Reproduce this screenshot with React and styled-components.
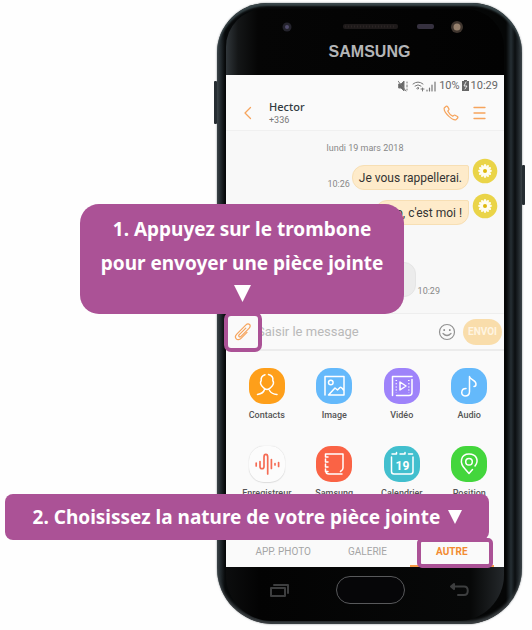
import React from "react";
import styled, { createGlobalStyle } from "styled-components";

const PLUM = "#ab5296";
const ORANGE = "#f6a45c";

const GlobalStyle = createGlobalStyle`
  * { box-sizing: border-box; }
  body { margin: 0; background: #fefefe; font-family: Roboto, "Liberation Sans", sans-serif; }
  button { margin: 0; padding: 0; border: 0; background: none; font: inherit; color: inherit; cursor: pointer; }
  p, h1, h2 { margin: 0; font-weight: 400; }
  svg { display: block; fill: none; stroke-linecap: round; stroke-linejoin: round; }
`;

const Page = styled.main`
  position: relative;
  display: grid;
  grid-template-columns: 217fr 305fr 10fr;
  padding: 3px 0 6px;
`;

const Phone = styled.section`
  position: relative;
  grid-column: 2;
  padding: 0 18px 0 9px;
  border-radius: 50px 50px 56px 56px;
  background: linear-gradient(90deg, #394247 0, #20272b 4px, #07090a 8px, #050606 289px, #252e33 294px, #0b0e10 298px, #1d2327 301px, #394145 100%);
  box-shadow: inset 0 3px 2px #39464a, inset 0 -3px 3px #3c4144, 0 0 2px #777d80;
`;

const SideKey = styled.span`
  position: absolute;
  ${(p) => p.$side}: -3px;
  top: ${(p) => p.$top}px;
  width: 3px;
  height: ${(p) => p.$length}px;
  border-radius: 1px;
  background: #262d32;
`;

const TopBezel = styled.header`
  margin-top: 6px;
  height: 66px;
  border-radius: 38px 38px 0 0;
  background: linear-gradient(90deg, #30363a 0, #141617 12px, #050505 32px, #020202 100%);
  display: flex;
  flex-direction: column;
  align-items: center;
`;

const Sensors = styled.svg`
  width: 100%;
  height: 32px;
`;

const Brand = styled.h1`
  padding-left: 9px;
  color: #b4b5b7;
  font: 700 16px/22px "Liberation Sans", Arial, sans-serif;
`;

const Screen = styled.div`
  background: #fafafa;
  color: #252525;
`;

const StatusBar = styled.div`
  height: 21px;
  padding-right: 6px;
  display: flex;
  align-items: center;
  justify-content: flex-end;
  gap: 2px;
  color: #666;
  font-size: 11px;
  line-height: 20px;
`;

const ContactBar = styled.header`
  height: 35px;
  padding: 0 18px 0 17px;
  display: flex;
  align-items: center;
  border-bottom: 1px solid #f0f0f0;
`;

const IconButton = styled.button`
  display: grid;
  place-items: center;
  flex: none;
  color: ${ORANGE};
`;

const Identity = styled.div`
  flex: 1;
  margin-left: 16px;
`;

const Name = styled.h2`
  font: 500 11px/14px "Noto Sans", sans-serif;
  color: #333a40;
`;

const Number = styled.p`
  font-size: 9px;
  line-height: 12px;
  color: #777;
`;

const HeaderActions = styled.div`
  display: flex;
  align-items: center;
  gap: 14px;
`;

const Chat = styled.div`
  height: 182px;
  padding-top: 10px;
  background: #f8f8f8;
`;

const ChatDate = styled.p`
  text-align: center;
  font-size: 9px;
  line-height: 14px;
  color: #888;
`;

const SentRow = styled.div`
  display: flex;
  justify-content: flex-end;
  align-items: flex-end;
  height: 35px;
  padding-right: 6px;
`;

const Time = styled.time`
  font-size: 9px;
  line-height: 12px;
  color: #888;
  margin-right: 2px;
`;

const SentBubble = styled.p`
  height: 25px;
  padding: 0 6px;
  border: 1px solid #f7dfb4;
  border-radius: 12px 2px 12px 12px;
  background: #feebca;
  font-size: 12px;
  line-height: 24px;
  color: #333;
`;

const Avatar = styled.svg`
  width: 26px;
  height: 26px;
  margin: 0 0 6px 3px;
`;

const ReceivedRow = styled.div`
  display: flex;
  align-items: flex-end;
  gap: 2px;
  padding: 37px 62px 0 28px;
`;

const ReceivedBubble = styled.div`
  flex: 1;
  height: 35px;
  border: 1px solid #e5e5e5;
  border-radius: 2px 12px 12px 12px;
  background: #ececec;
`;

const Composer = styled.form`
  height: 38px;
  padding-right: 2px;
  display: flex;
  align-items: center;
  border-top: 1px solid #eee;
  border-bottom: 2px solid #ececec;
`;

const AttachButton = styled(IconButton)`
  position: relative;
  width: 38px;
  height: 40px;
  margin-left: -2px;
  border: 4px solid ${PLUM};
  border-radius: 7px;
  background: #fafafa;
`;

const MessageInput = styled.input`
  flex: 1;
  min-width: 0;
  height: 30px;
  margin-left: -5px;
  padding: 0;
  border: 0;
  outline: 0;
  background: none;
  font: 13px/30px Roboto, sans-serif;
  &::placeholder { color: #b9b9b9; opacity: 1; }
`;

const SendButton = styled.button`
  width: 39px;
  height: 26px;
  margin-left: 7px;
  border-radius: 13px;
  background: #f9ddab;
  color: #fff5e2;
  font-size: 10px;
  font-weight: 700;
`;

const Attachments = styled.div`
  height: 187px;
  padding: 17px 1px 0 7px;
  display: grid;
  grid-template-columns: repeat(4, 1fr);
  grid-auto-rows: 78px;
  overflow: hidden;
`;

const Attachment = styled.button`
  display: flex;
  flex-direction: column;
  align-items: center;
  gap: 4px;
  font-size: 9px;
  font-weight: 500;
  line-height: 14px;
  color: #555;
`;

const Tile = styled.svg`
  width: 36px;
  height: 36px;
  border-radius: 15px;
  background: ${(p) => p.$fill};
  stroke: ${(p) => p.$ink || "#fff"};
  stroke-width: 1.5;
  box-shadow: ${(p) => (p.$ink ? "0 1px 1px #ddd, 0 0 1px #ccc" : "none")};
`;

const Tabs = styled.nav`
  height: 29px;
  padding: 0 10px 0 15px;
  display: grid;
  grid-template-columns: repeat(3, 1fr);
`;

const Tab = styled.button`
  position: relative;
  font-size: 10px;
  font-weight: ${(p) => (p.$active ? 700 : 400)};
  color: ${(p) => (p.$active ? "#f28b30" : "#a5a5a5")};
  border-bottom: 2px solid ${(p) => (p.$active ? "#f79a44" : "transparent")};
`;

const TabMarker = styled.span`
  position: absolute;
  inset: 0 1px -3px 7px;
  border: 4px solid ${PLUM};
  border-radius: 5px;
`;

const BottomBezel = styled.footer`
  height: 54px;
  margin-bottom: 3px;
  padding: 0 35px 8px 44px;
  border-radius: 0 0 46px 46px;
  background: linear-gradient(90deg, #0c0d0e, #030303 12%, #070808 88%, #24282b 100%);
  display: flex;
  align-items: center;
  justify-content: space-between;
  color: #3d3e3f;
`;

const BezelKey = styled.button`
  display: grid;
  place-items: center;
`;

const HomeKey = styled.button`
  width: 69px;
  height: 28px;
  border: 1px solid #58595b;
  border-radius: 14px;
  background: #060608;
`;

const Callout = styled.p`
  position: absolute;
  z-index: 2;
  top: ${(p) => p.$top}px;
  left: ${(p) => p.$left}%;
  right: ${(p) => p.$right}%;
  padding: ${(p) => p.$pad}px 0;
  border-radius: ${(p) => p.$radius}px;
  background: ${PLUM};
  color: #fff;
  text-align: center;
  white-space: nowrap;
  font: 700 19px/34px "Noto Sans", "Open Sans", sans-serif;
`;

const Arrow = styled.svg`
  display: ${(p) => (p.$block ? "block" : "inline-block")};
  width: ${(p) => (p.$block ? 17 : 14)}px;
  height: ${(p) => (p.$block ? 17 : 14)}px;
  margin: ${(p) => (p.$block ? "5px auto 4px" : "0 0 0 3px")};
  vertical-align: 0;
  fill: #fff;
`;

function DownArrow({ block }) {
  return (
    <Arrow $block={block} viewBox="0 0 16 16" aria-hidden="true">
      <path d="M0 0H16L8 16Z" />
    </Arrow>
  );
}

function Daisy() {
  const petals = Array.from({ length: 12 }, (_, i) => i * 30);
  return (
    <Avatar viewBox="0 0 26 26" aria-hidden="true">
      <circle cx="13" cy="13" r="12.3" fill="#ead448" />
      {petals.map((a) => (
        <ellipse key={a} cx="13" cy="9.500" rx="1.4" ry="3.400" fill="#fffdf0" transform={`rotate(${a} 13 13)`} />
      ))}
      <circle cx="13" cy="13" r="2" fill="#dfb90c" />
    </Avatar>
  );
}

const drawings = {
  contacts: <path d="M19.500 6.500C23 7.500 24.300 10 23.800 12.500C25.500 15 23.500 18 21.500 19.800C19.500 22 16.500 22 14.500 19.800C12 17.500 10.500 15 12.200 12.500C11.800 9.500 13.500 7.500 16 6.700M15.500 21.500Q14.500 25.500 8.500 26.500M20.500 22.500Q22.500 26 28 26.500" />,
  image: (
    <>
      <path d="M9 27V8.500H28V27H12.500L19 20L21.500 22L24 19.500Q25 18.500 27.500 22" />
      <circle cx="14.800" cy="14.500" r="2.300" />
    </>
  ),
  video: (
    <>
      <path d="M28 8.500H8.500V27.500M12.500 27.500H25Q28 27.500 28 24.500V11.500M16 14V22L22 18Z" />
      <path d="M12.300 12V25M24.800 12V25" strokeDasharray="1 2.200" strokeLinecap="butt" />
    </>
  ),
  audio: <path d="M15 20.500C9.500 20.500 9.500 28 14 28Q18.500 28 18.500 23.500V8.500C19 12 25 12 25 16Q25 18.500 23 18.500" />,
  recorder: (
    <path strokeWidth="1.700" d="M7.200 17V20M11 15.500V20.500C11 23.500 15 23.500 15 20.500V11C15 7.500 18.700 7.500 18.700 11V28M22.400 13.500V22.500M26 17.500V19M29.600 16.500V20.500" />
  ),
  notes: <path d="M9.500 11V8H27V22Q27 24 24.500 25.500M10 25.500Q10 28 13 28H26M9.500 11H12M9.500 13V16H12M9.500 18V21H12M9.500 23V25.500H12" />,
  calendar: (
    <>
      <path d="M8 8H12.500M16 8H21M24.500 8H28.500M12.500 6.500V8M21 6.500V8M7.500 11V25.500Q7.500 28 10 28H26.500Q29 28 29 25.500V11" />
      <text x="18.500" y="23.500" textAnchor="middle" fill="#fff" stroke="none" fontFamily="Roboto, sans-serif" fontSize="12" fontWeight="700">19</text>
    </>
  ),
  position: (
    <>
      <path d="M21.500 23.500L18 27.500L14.500 23.500C7.500 16.500 10 8 18 8C26 8 28 15 24 20" />
      <circle cx="18" cy="15.800" r="3.300" />
    </>
  ),
};

const attachments = [
  { id: "contacts", label: "Contacts", fill: "#fe9f1a" },
  { id: "image", label: "Image", fill: "#64b9fb" },
  { id: "video", label: "Vidéo", fill: "#9e83fa" },
  { id: "audio", label: "Audio", fill: "#64b9fb" },
  { id: "recorder", label: "Enregistreur", fill: "#fcfcfc", ink: "#f56c55" },
  { id: "notes", label: "Samsung", fill: "#fa6345" },
  { id: "calendar", label: "Calendrier", fill: "#42bfce" },
  { id: "position", label: "Position", fill: "#43d63c" },
];

function StatusIcons() {
  return (
    <svg width="39" height="12" viewBox="0 0 39 12" stroke="#777" aria-hidden="true">
      <path d="M1 4H3L6 1V11L3 8H1Z" fill="#666" />
      <path d="M0 1L8 11M9 2V3M9 5V7M9 9V10" />
      <path d="M15 4Q20 0 25 4M17 6Q20 3.500 23 6M19 8Q20 7 21 8L20 9Z" />
      <path d="M23 9H26M24.500 8V11" />
      <path d="M29 11V10M31.500 11V8M34 11V5M37 11V2" strokeWidth="1.200" />
    </svg>
  );
}

export default function App() {
  return (
    <>
      <GlobalStyle />
      <Page>
        <Phone>
          <SideKey $side="left" $top={78} $length={43} />
          <SideKey $side="right" $top={162} $length={40} />
          <TopBezel>
            <Sensors viewBox="0 0 278 32" aria-hidden="true">
              <circle cx="61" cy="18" r="4.500" fill="#24232c" />
              <circle cx="61" cy="18" r="2" fill="#514c6c" />
              <rect x="117" y="15" width="55" height="5" rx="2" fill="#1e1a1a" />
              <path d="M119 17.500H170" stroke="#2b2524" strokeWidth="2" strokeDasharray="1 2" strokeLinecap="butt" />
              <rect x="191" y="15" width="17" height="5" rx="2" fill="#36313f" />
              <circle cx="231" cy="18" r="6" fill="#40362f" />
              <circle cx="231" cy="18" r="3.500" fill="#96806c" />
            </Sensors>
            <Brand>SAMSUNG</Brand>
          </TopBezel>

          <Screen>
            <StatusBar>
              <StatusIcons />
              <span>10%</span>
              <svg width="7" height="11" viewBox="0 0 7 11" aria-hidden="true">
                <path d="M2 0H5V1H7V11H0V1H2Z" fill="#666" />
                <path d="M4 2L2 6H5L3 9" stroke="#fff" strokeWidth="0.800" />
              </svg>
              <span>10:29</span>
            </StatusBar>

            <ContactBar>
              <IconButton aria-label="Retour">
                <svg width="10" height="14" viewBox="0 0 10 14" stroke="currentColor" strokeWidth="1.300"><path d="M7.500 1.500L2 7L7.500 12.500" /></svg>
              </IconButton>
              <Identity>
                <Name>Hector</Name>
                <Number>+336</Number>
              </Identity>
              <HeaderActions>
                <IconButton aria-label="Appeler">
                  <svg width="16" height="16" viewBox="0 0 16 16" stroke="currentColor" strokeWidth="1.200">
                    <path d="M1.200 3L3.200 1.200Q4 .8 4.600 1.600L5.900 3.900Q6.200 4.600 5.600 5.200L4.700 6.100Q6.500 9.700 9.800 11.300L10.800 10.400Q11.400 9.900 12.100 10.300L14.400 11.600Q15.200 12.200 14.700 13L13.100 14.700Q10.500 15.600 5.900 11.400Q.5 6.300 1.200 3Z" />
                  </svg>
                </IconButton>
                <IconButton aria-label="Menu">
                  <svg width="13" height="14" viewBox="0 0 13 14" stroke="currentColor" strokeWidth="1.300"><path d="M1 1.500H12M1 7H12M1 12.500H12" /></svg>
                </IconButton>
              </HeaderActions>
            </ContactBar>

            <Chat>
              <ChatDate>lundi 19 mars 2018</ChatDate>
              <SentRow>
                <Time>10:26</Time>
                <SentBubble>Je vous rappellerai.</SentBubble>
                <Daisy />
              </SentRow>
              <SentRow>
                <SentBubble>Allo, c'est moi !</SentBubble>
                <Daisy />
              </SentRow>
              <ReceivedRow>
                <ReceivedBubble />
                <Time>10:29</Time>
              </ReceivedRow>
            </Chat>

            <Composer onSubmit={(e) => e.preventDefault()}>
              <AttachButton type="button" aria-label="Joindre un fichier">
                <svg width="18" height="18" viewBox="0 0 18 18" stroke="currentColor" strokeWidth="1.200">
                  <path d="M11.800 5.200L5.300 11.700C3.900 13.100 5.500 14.800 7 13.300L15 5.300C18 2.200 14.600 -.8 11.700 2.100L3 10.800C-.8 14.600 3.400 19 7.300 15.100L13 9.400" />
                </svg>
              </AttachButton>
              <MessageInput aria-label="Message" placeholder="Saisir le message" />
              <IconButton type="button" aria-label="Émoticônes">
                <svg width="18" height="18" viewBox="0 0 18 18" stroke="#929292" strokeWidth="1.200">
                  <circle cx="9" cy="9" r="7.500" />
                  <path d="M5 10.500Q9 14.500 13 10.500" />
                  <path d="M6.200 6.800V7.200M11.800 6.800V7.200" strokeWidth="1.800" />
                </svg>
              </IconButton>
              <SendButton type="submit">ENVOI</SendButton>
            </Composer>

            <Attachments>
              {attachments.map(({ id, label, fill, ink }) => (
                <Attachment key={id}>
                  <Tile viewBox="0 0 36 36" $fill={fill} $ink={ink} aria-hidden="true">{drawings[id]}</Tile>
                  <span>{label}</span>
                </Attachment>
              ))}
            </Attachments>

            <Tabs>
              <Tab>APP. PHOTO</Tab>
              <Tab>GALERIE</Tab>
              <Tab $active aria-current="page">AUTRE<TabMarker /></Tab>
            </Tabs>
          </Screen>

          <BottomBezel>
            <BezelKey aria-label="Applications récentes">
              <svg width="21" height="14" viewBox="0 0 21 14" stroke="currentColor" strokeWidth="2"><path d="M1 5H15V13H1ZM4 2H18V10" /></svg>
            </BezelKey>
            <HomeKey aria-label="Accueil" />
            <BezelKey aria-label="Précédent">
              <svg width="20" height="14" viewBox="0 0 20 14" stroke="currentColor" strokeWidth="2"><path d="M5 1L2 3.500L5 6ZM2 3.500H15C20 3.500 20 12 15 12H9" /></svg>
            </BezelKey>
          </BottomBezel>
        </Phone>

        <Callout $top={204} $left={15} $right={24} $pad={8} $radius={19}>
          1. Appuyez sur le trombone
          <br />
          pour envoyer une pièce jointe
          <DownArrow block />
        </Callout>
        <Callout $top={494} $left={1} $right={8} $pad={6} $radius={8}>
          2. Choisissez la nature de votre pièce jointe <DownArrow />
        </Callout>
      </Page>
    </>
  );
}
